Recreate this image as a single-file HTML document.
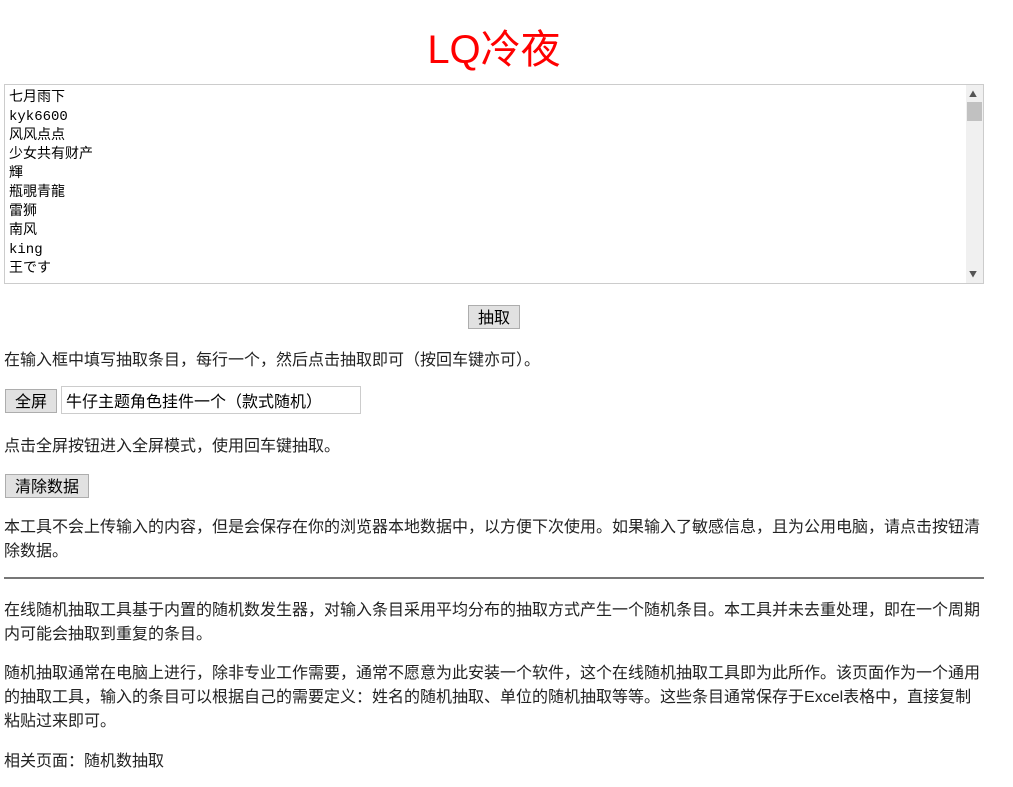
<!DOCTYPE html>
<html><head><meta charset="utf-8"><style>
body{margin:0;width:1013px;height:787px;background:#fff;font-family:"WenQuanYi Zen Hei","Noto Sans CJK SC",sans-serif;font-size:16px;color:#222;position:relative;overflow:hidden}
.a{position:absolute;left:4px;white-space:nowrap;line-height:24px}
.e{font-family:"Liberation Sans",sans-serif;line-height:1}
h1{position:absolute;left:0;width:988px;top:27px;margin:0;text-align:center;color:#f00;font-weight:normal;font-size:40px;line-height:46px;font-family:"Liberation Sans","Noto Sans CJK SC",sans-serif}
.ta{position:absolute;left:4px;top:84px;width:978px;height:198px;border:1px solid #ccc;overflow:hidden}
.lines{position:absolute;left:4px;top:4px;font-family:"Liberation Mono","WenQuanYi Zen Hei",monospace;font-size:14px;line-height:19px;color:#000}
.sb{position:absolute;right:0;top:0;width:17px;height:198px;background:#f0f0f0}
.btn{position:absolute;background:#e1e1e1;border:1px solid #adadad;font-size:16px;color:#000;text-align:center;box-sizing:border-box}
</style></head><body>
<h1>LQ冷夜</h1>
<div class="ta"><div class="lines">七月雨下<br>kyk6600<br>风风点点<br>少女共有财产<br>輝<br>瓶覗青龍<br>雷狮<br>南风<br>king<br>王です</div>
<div class="sb"><div style="position:absolute;left:3px;top:4px;font-size:8px;color:#555">▲</div><div style="position:absolute;left:1px;top:17px;width:15px;height:19px;background:#c1c1c1"></div><div style="position:absolute;left:3px;bottom:3px;font-size:8px;color:#555">▼</div></div></div>
<div class="btn" style="left:468px;top:305px;width:52px;height:24px;line-height:21px">抽取</div>
<div class="a" style="top:346px">在输入框中填写抽取条目，每行一个，然后点击抽取即可（按回车键亦可）。</div>
<div class="btn" style="left:5px;top:389px;width:52px;height:24px;line-height:21px">全屏</div>
<div style="position:absolute;left:61px;top:386px;width:300px;height:28px;border:1px solid #ccc;box-sizing:border-box;line-height:26px;padding-left:4px;color:#000">牛仔主题角色挂件一个（款式随机）</div>
<div class="a" style="top:432px">点击全屏按钮进入全屏模式，使用回车键抽取。</div>
<div class="btn" style="left:5px;top:474px;width:84px;height:24px;line-height:21px">清除数据</div>
<div class="a" style="top:513px">本工具不会上传输入的内容，但是会保存在你的浏览器本地数据中，以方便下次使用。如果输入了敏感信息，且为公用电脑，请点击按钮清<br>除数据。</div>
<div style="position:absolute;left:4px;top:577px;width:980px;height:2px;background:#777"></div>
<div class="a" style="top:596px">在线随机抽取工具基于内置的随机数发生器，对输入条目采用平均分布的抽取方式产生一个随机条目。本工具并未去重处理，即在一个周期<br>内可能会抽取到重复的条目。</div>
<div class="a" style="top:659px">随机抽取通常在电脑上进行，除非专业工作需要，通常不愿意为此安装一个软件，这个在线随机抽取工具即为此所作。该页面作为一个通用<br>的抽取工具，输入的条目可以根据自己的需要定义：姓名的随机抽取、单位的随机抽取等等。这些条目通常保存于<span class="e">Excel</span>表格中，直接复制<br>粘贴过来即可。</div>
<div class="a" style="top:747px">相关页面：随机数抽取</div>
</body></html>
